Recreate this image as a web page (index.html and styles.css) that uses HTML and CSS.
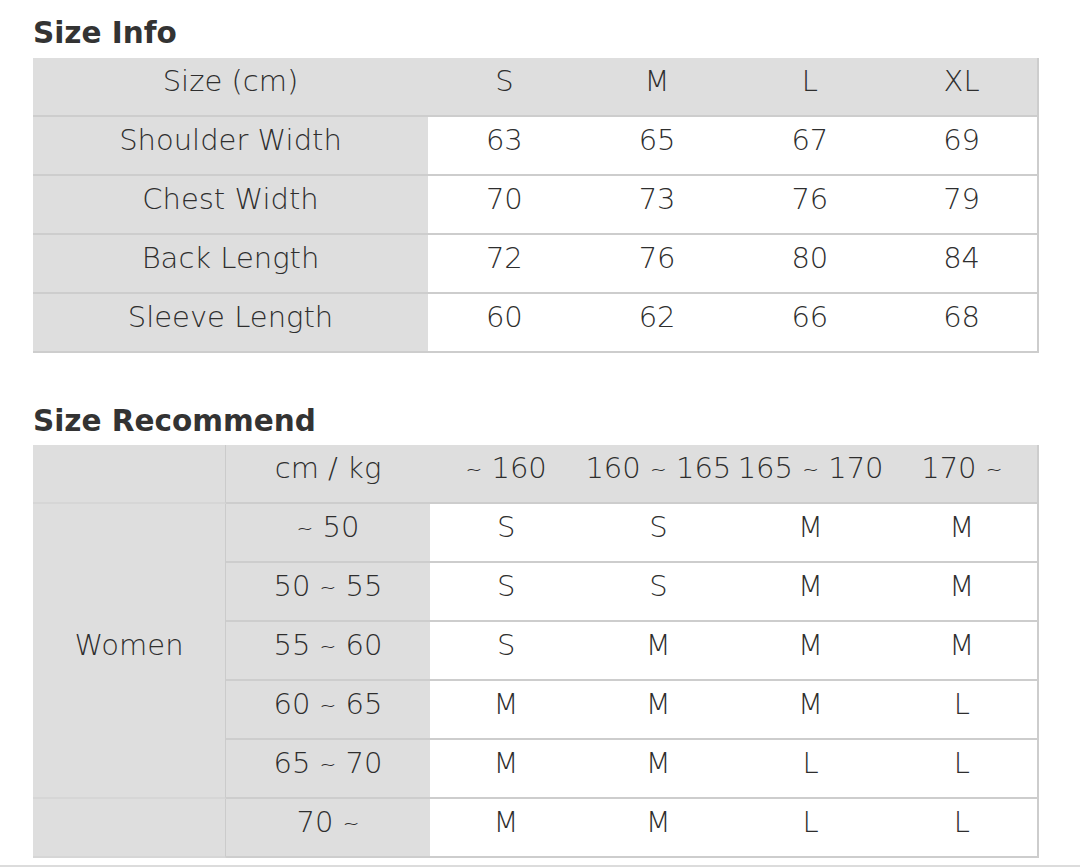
FILE: index.html
```html
<!DOCTYPE html>
<html>
<head>
<meta charset="utf-8">
<link rel="stylesheet" href="styles.css">
</head>
<body>
<div class="page">
  <h2 class="title first">Size Info</h2>
  <table class="chart info">
    <colgroup><col class="c-label"><col><col><col><col></colgroup>
    <tr class="head">
      <td class="lbl">Size (cm)</td><td>S</td><td>M</td><td>L</td><td class="last">XL</td>
    </tr>
    <tr>
      <td class="lbl">Shoulder Width</td><td>63</td><td>65</td><td>67</td><td class="last">69</td>
    </tr>
    <tr>
      <td class="lbl">Chest Width</td><td>70</td><td>73</td><td>76</td><td class="last">79</td>
    </tr>
    <tr>
      <td class="lbl">Back Length</td><td>72</td><td>76</td><td>80</td><td class="last">84</td>
    </tr>
    <tr>
      <td class="lbl">Sleeve Length</td><td>60</td><td>62</td><td>66</td><td class="last">68</td>
    </tr>
  </table>

  <h2 class="title second">Size Recommend</h2>
  <table class="chart rec">
    <colgroup><col class="c-group"><col class="c-range"><col><col><col><col></colgroup>
    <tr class="head">
      <td class="lbl grp"></td><td class="lbl">cm / kg</td><td><span class="t">~</span> 160</td><td>160 <span class="t">~</span> 165</td><td>165 <span class="t">~</span> 170</td><td class="last">170 <span class="t">~</span></td>
    </tr>
    <tr>
      <td class="lbl grp" rowspan="5">Women</td><td class="lbl"><span class="t">~</span> 50</td><td>S</td><td>S</td><td>M</td><td class="last">M</td>
    </tr>
    <tr>
      <td class="lbl">50 <span class="t">~</span> 55</td><td>S</td><td>S</td><td>M</td><td class="last">M</td>
    </tr>
    <tr>
      <td class="lbl">55 <span class="t">~</span> 60</td><td>S</td><td>M</td><td>M</td><td class="last">M</td>
    </tr>
    <tr>
      <td class="lbl">60 <span class="t">~</span> 65</td><td>M</td><td>M</td><td>M</td><td class="last">L</td>
    </tr>
    <tr>
      <td class="lbl">65 <span class="t">~</span> 70</td><td>M</td><td>M</td><td>L</td><td class="last">L</td>
    </tr>
    <tr>
      <td class="lbl grp"></td><td class="lbl">70 <span class="t">~</span></td><td>M</td><td>M</td><td>L</td><td class="last">L</td>
    </tr>
  </table>
  <div class="rule"></div>
</div>
</body>
</html>
```

FILE: styles.css
```css
html, body {
  margin: 0;
  padding: 0;
  background: #ffffff;
}

body {
  font-family: "DejaVu Sans", "Open Sans", sans-serif;
  color: #2e2e2e;
  width: 1080px;
  height: 868px;
  overflow: hidden;
}

.page {
  padding: 16px 0 0 0;
}

.title {
  margin: 0 0 0 33px;
  font-size: 29.5px;
  line-height: 34px;
  font-weight: bold;
  color: #333333;
}

.title.first {
  margin-bottom: 8px;
}

.title.second {
  margin-top: 51px;
  margin-bottom: 7px;
}

.chart {
  margin-left: 33px;
  width: 1006px;
  border-collapse: separate;
  border-spacing: 0;
  table-layout: fixed;
}

.chart td {
  text-align: center;
  font-size: 29px;
  font-weight: 200;
  line-height: 47px;
  height: 47px;
  padding: 0 0 10px 0;
  border-bottom: 2px solid #cdcdcd;
  white-space: nowrap;
  background: #ffffff;
}

.chart td .t {
  font-size: 20px;
  line-height: 1;
  position: relative;
  top: -2px;
}

.chart .head td {
  background: #dedede;
}

.chart td.lbl {
  background: #dedede;
}

.chart td.last {
  border-right: 2px solid #cdcdcd;
}

.info .c-label {
  width: 395px;
}

.rec .c-group {
  width: 193px;
}

.rec .c-range {
  width: 204px;
}

.rec td.grp {
  border-right: 1px solid #cbcbcb;
  border-bottom-color: #d6d6d6;
}

.rec td[rowspan] {
  vertical-align: middle;
}

.rule {
  margin-top: 7px;
  height: 0;
  border-top: 2px solid #dcdcdc;
  width: 1080px;
}
```
